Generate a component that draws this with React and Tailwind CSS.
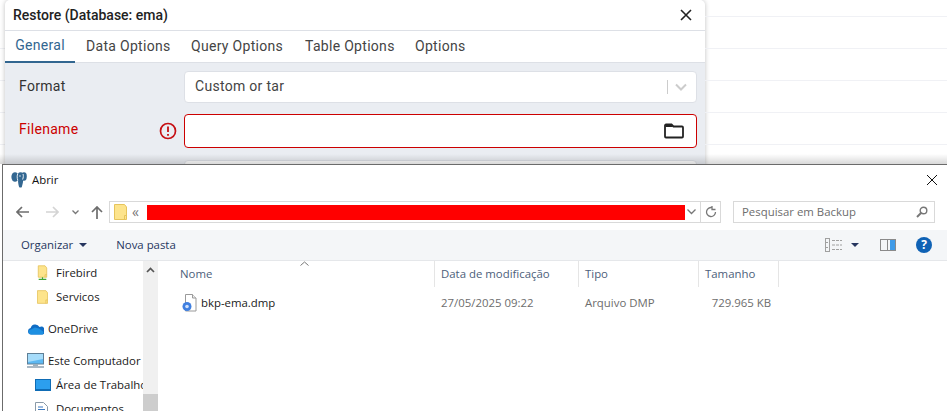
import React from 'react';

const FolderSmall = ({ className = '' }) => (
  <svg width="13" height="16" viewBox="0 0 13 16" className={className}>
    <path d="M0.500 0.500h10l2 2.500v12.500h-12z" fill="#fde48c" stroke="#e6c45c" />
    <path d="M10.500 15.500v-4h2" fill="none" stroke="#e6c45c" />
  </svg>
);

const NetFolder = ({ className = '' }) => (
  <svg width="13" height="18" viewBox="0 0 13 18" className={className}>
    <path d="M1.500 0.500h8l2 2.500v11h-10z" fill="#fde48c" stroke="#e6c45c" />
    <path d="M9.500 14v-3h2" fill="none" stroke="#e6c45c" />
    <path d="M6.500 14v2M2 16.500h9" stroke="#3fa535" strokeWidth="1.400" fill="none" />
  </svg>
);

const Elephant = () => (
  <svg width="16" height="16" viewBox="0 0 16 16">
    <ellipse cx="4" cy="5" rx="3.600" ry="4.800" fill="#336791" />
    <ellipse cx="9.500" cy="5" rx="3.800" ry="4.800" fill="#336791" />
    <ellipse cx="13" cy="4.500" rx="2.800" ry="4.200" fill="#336791" />
    <path d="M7 8h5c.3 2.500-.5 4-1.200 7-.2.800-2.300.800-2.700 0C7.500 13 7 10.500 7 8z" fill="#336791" />
    <path d="M6.800 1.500C6 3.500 6 6 6.800 8.500M12 2c.6 1.500.4 3.500-.4 5.500" fill="none" stroke="#ffffff" strokeWidth="0.900" />
    <circle cx="9" cy="4" r="0.700" fill="#ffffff" />
  </svg>
);

const FileDmp = () => (
  <svg width="15" height="18" viewBox="0 0 15 18">
    <path d="M3.500 0.500h7l3.500 3.500v13h-10.500z" fill="#fff" stroke="#9a9a9a" />
    <path d="M10.500 0.500v3.500h3.500" fill="#eee" stroke="#9a9a9a" />
    <circle cx="5" cy="12.500" r="4.500" fill="#3f7fe0" />
    <circle cx="5" cy="12.500" r="1.800" fill="#cfe0fb" />
  </svg>
);

const Cloud = () => (
  <svg width="17" height="12" viewBox="0 0 17 12">
    <path d="M4 11.500a3.300 3.300 0 0 1-.4-6.500A4.800 4.800 0 0 1 12.500 4a3.800 3.800 0 0 1 3 7.500z" fill="#0f6cc4" />
    <path d="M4 11.500a2.500 2.500 0 0 1 0-5l4-2 4 1 4 3c1 1 .5 3-1 3z" fill="#1d8fe1" />
  </svg>
);

const Monitor = () => (
  <svg width="17" height="16" viewBox="0 0 17 16">
    <rect x="0.500" y="0.500" width="16" height="10.500" fill="#5cb8f2" stroke="#5f7f96" />
    <path d="M1 1h15v5L1 9z" fill="#a6dcfa" />
    <rect x="6" y="11" width="5" height="2" fill="#9db0bd" />
    <rect x="0" y="13" width="17" height="2" fill="#a9b8c4" />
  </svg>
);

const Desktop = () => (
  <svg width="16" height="12" viewBox="0 0 16 12">
    <rect x="0.500" y="0.500" width="15" height="11" fill="#2c9fee" stroke="#0f6cb5" />
    <path d="M1 10h14v1H1z" fill="#0f6cb5" />
  </svg>
);

const DocIcon = () => (
  <svg width="13" height="14" viewBox="0 0 13 14">
    <path d="M0.500 0.500h8l4 4v9h-12z" fill="#fff" stroke="#8a9aa8" />
    <path d="M3 5h5M3 7.500h7M3 10h7" stroke="#3a78c0" />
  </svg>
);

const NavItem = ({ icon, label, className = '' }) => (
  <div className={`flex items-center h-[24px] shrink-0 whitespace-nowrap ${className}`}>
    <div className="w-[21px] flex justify-start shrink-0">{icon}</div>
    <span>{label}</span>
  </div>
);

const columns = [
  { label: 'Data de modificação', width: 'w-[144px]' },
  { label: 'Tipo', width: 'w-[120px]' },
  { label: 'Tamanho', width: 'w-[80px]' },
];

export default function App() {
  return (
    <div className="relative w-[947px] h-[411px] overflow-hidden bg-white flex flex-col">
      {/* pgAdmin part behind the file dialog */}
      <div className="relative h-[164px] shrink-0 flex items-start font-['Roboto',sans-serif] overflow-hidden">
        <div className="w-[5px] shrink-0 flex flex-col">
          <div className="h-[49px] border-b border-[#f0f1f5]" />
          <div className="h-[32px] border-b border-[#f0f1f5]" />
          <div className="h-[32px] border-b border-[#f0f1f5]" />
          <div className="h-[32px] border-b border-[#f0f1f5]" />
        </div>
        <div className="w-[700px] shrink-0 pb-[20px] bg-[#eaedf2] rounded-t-[5px] shadow-[0_0_5px_rgba(0,0,0,0.25)] flex flex-col">
          <div className="h-[31px] shrink-0 bg-white rounded-t-[5px] border-b border-[#dde0e6] flex items-center justify-between pl-[8px] pr-[13px]">
            <span className="text-[14px] font-medium text-[#222222]">Restore (Database: ema)</span>
            <svg width="12" height="12" viewBox="0 0 12 12">
              <path d="M1 1l10 10M11 1L1 11" stroke="#222222" strokeWidth="1.600" fill="none" />
            </svg>
          </div>
          <div className="h-[32px] shrink-0 bg-white border-b border-[#dde0e6] flex text-[14px] tracking-[0.3px] text-[#444444]">
            <div className="w-[70px] h-[32px] pb-[1px] border-b-[2px] border-[#326690] text-[#326690] flex items-center justify-center">General</div>
            <div className="pl-[11px] pb-[1px] w-[105px] flex items-center">Data Options</div>
            <div className="pl-[11px] pb-[1px] w-[114px] flex items-center">Query Options</div>
            <div className="pl-[11px] pb-[1px] w-[111px] flex items-center">Table Options</div>
            <div className="pl-[10px] pb-[1px] flex items-center">Options</div>
          </div>
          <div className="flex flex-col pl-[14px] pr-[8px] pt-[8px] text-[14px] tracking-[0.3px]">
            <div className="flex items-center h-[32px]">
              <span className="w-[165px] pb-[1px] text-[#333333]">Format</span>
              <div className="flex-1 h-[32px] bg-white rounded-[4px] border border-[#dde0e6] flex items-center pl-[10px] pr-[8px] text-[#444444]">
                <span className="flex-1 pb-[1px]">Custom or tar</span>
                <div className="w-px h-[14px] bg-[#cccccc] mr-[6px]" />
                <svg width="14" height="14" viewBox="0 0 14 14">
                  <path d="M2 4.500l5 5 5-5" stroke="#cccccc" strokeWidth="2" fill="none" />
                </svg>
              </div>
            </div>
            <div className="flex items-center h-[34px] mt-[11px]">
              <span className="w-[140px] pb-[4px] text-[#cc0000]">Filename</span>
              <div className="w-[25px] flex items-center">
                <svg width="18" height="18" viewBox="0 0 18 18">
                  <circle cx="9" cy="9" r="7.500" stroke="#c60f13" strokeWidth="1.700" fill="none" />
                  <path d="M9 4.500v5.500M9 12v1.800" stroke="#c60f13" strokeWidth="1.800" fill="none" />
                </svg>
              </div>
              <div className="flex-1 h-[34px] bg-white rounded-[4px] border border-[#cc0000] flex items-center justify-end pr-[12px]">
                <svg width="20" height="16" viewBox="0 0 20 16">
                  <path d="M1 2.500a1 1 0 0 1 1-1h5.500l2 2H18a1 1 0 0 1 1 1v9a1 1 0 0 1-1 1H2a1 1 0 0 1-1-1z" fill="none" stroke="#222222" strokeWidth="1.800" />
                  <path d="M1.500 2h6l1.500 2H1.500z" fill="#222222" />
                </svg>
              </div>
            </div>
            <div className="h-[31px] mt-[12px] ml-[165px] bg-white rounded-[4px] border border-[#dde0e6]" />
          </div>
        </div>
        <div className="flex-1 flex flex-col">
          <div className="h-[17px] border-b border-[#f0f1f5]" />
          <div className="h-[32px] border-b border-[#f0f1f5]" />
          <div className="h-[32px] border-b border-[#f0f1f5]" />
          <div className="h-[32px] border-b border-[#f0f1f5]" />
          <div className="h-[32px] border-b border-[#f0f1f5]" />
        </div>
        {/* shadow cast by the file dialog */}
        <div className="absolute left-0 right-0 bottom-0 h-[10px] bg-gradient-to-b from-transparent to-black/15" />
      </div>

      {/* Windows file dialog */}
      <div className="flex-1 min-h-0 ml-[2px] border-t border-l border-[#6b6b6b] bg-white flex flex-col font-['Open_Sans',sans-serif] text-[11.4px] overflow-hidden">
        <div className="h-[30px] shrink-0 flex items-center pl-[8px] pr-[9px]">
          <Elephant />
          <span className="ml-[5px] text-[#111111]">Abrir</span>
          <svg width="12" height="12" viewBox="0 0 12 12" className="ml-auto">
            <path d="M1 1l10 10M11 1L1 11" stroke="#111111" strokeWidth="1" fill="none" />
          </svg>
        </div>

        <div className="h-[35px] shrink-0 flex items-start pt-[6px] pl-[13px] pr-[10px]">
          <div className="w-[93px] h-[22px] flex items-center">
            <svg width="13" height="12" viewBox="0 0 13 12" className="mr-[17px]">
              <path d="M6 1L1 6l5 5M1 6h12" stroke="#6d6d6d" strokeWidth="1.700" fill="none" />
            </svg>
            <svg width="13" height="12" viewBox="0 0 13 12" className="mr-[13px]">
              <path d="M7 1l5 5-5 5M12 6H0" stroke="#d4d4d4" strokeWidth="1.700" fill="none" />
            </svg>
            <svg width="7" height="5" viewBox="0 0 7 5" className="mr-[12px]">
              <path d="M.5.500L3.500 3.500 6.500.500" stroke="#777777" strokeWidth="1.300" fill="none" />
            </svg>
            <svg width="12" height="13" viewBox="0 0 12 13">
              <path d="M1 6l5-5 5 5M6 1v12" stroke="#6d6d6d" strokeWidth="1.700" fill="none" />
            </svg>
          </div>
          <div className="w-[612px] h-[22px] border border-[#d9d9d9] flex items-center pl-[4px]">
            <FolderSmall />
            <span className="w-[20px] pl-[5px] text-[#777777] text-[14px] leading-none">«</span>
            <div className="w-[538px] h-[15px] bg-[#ff0000] shrink-0" />
            <svg width="9" height="6" viewBox="0 0 9 6" className="ml-[2px]">
              <path d="M.5.500l4 4 4-4" stroke="#777777" strokeWidth="1.300" fill="none" />
            </svg>
            <div className="w-px h-[20px] bg-[#d9d9d9] ml-[4px]" />
            <div className="flex-1 flex justify-center">
              <svg width="12" height="12" viewBox="0 0 12 12">
                <path d="M10.500 6A4.500 4.500 0 1 1 7.500 1.800M7 0v3.500h3.500" stroke="#777777" strokeWidth="1.300" fill="none" />
              </svg>
            </div>
          </div>
          <div className="ml-[12px] w-[202px] h-[22px] border border-[#d9d9d9] flex items-center justify-between pl-[8px] pr-[6px] text-[#6d6d6d]">
            <span>Pesquisar em Backup</span>
            <svg width="12" height="12" viewBox="0 0 12 12">
              <circle cx="7.500" cy="4.500" r="3.300" stroke="#777777" strokeWidth="1.400" fill="none" />
              <path d="M5 7L1 11" stroke="#777777" strokeWidth="2" />
            </svg>
          </div>
        </div>

        <div className="h-[31px] shrink-0 bg-[#f4f6f8] border-b border-[#e5e7ea] flex items-center pl-[18px] pr-[15px] text-[#26365f]">
          <span>Organizar</span>
          <div className="ml-[6px] w-0 h-0 border-x-[4px] border-x-transparent border-t-[4px] border-t-[#26365f]" />
          <span className="ml-[29px]">Nova pasta</span>
          <div className="ml-auto flex items-center">
            <svg width="17" height="14" viewBox="0 0 17 14">
              <rect x="0.500" y="0.500" width="4" height="13" fill="none" stroke="#a0a0a0" />
              <path d="M0 4.500h5M0 9.500h5M7 2.500h10M7 7h10M7 11.500h10" stroke="#a0a0a0" strokeDasharray="3 1" />
            </svg>
            <div className="ml-[9px] w-0 h-0 border-x-[4px] border-x-transparent border-t-[4px] border-t-[#26365f]" />
            <div className="ml-[21px] w-[16px] h-[12px] border border-[#8a8a8a] flex justify-end">
              <div className="w-px h-full bg-[#8a8a8a] mr-[2px]" />
              <div className="w-[5px] h-full bg-[#3f9be8]" />
            </div>
            <div className="ml-[20px] w-[16px] h-[16px] rounded-full bg-[#0f62b5] text-white text-[12px] font-bold flex items-center justify-center leading-none">?</div>
          </div>
        </div>

        <div className="flex-1 min-h-0 flex">
          <div className="w-[140px] shrink-0 flex flex-col text-[#1a1a1a] overflow-hidden pl-[24px]">
            <NavItem icon={<NetFolder className="ml-[10px]" />} label={<span className="ml-[8px]">Firebird</span>} />
            <NavItem icon={<FolderSmall className="ml-[10px]" />} label={<span className="ml-[8px]">Servicos</span>} />
            <NavItem className="mt-[8px]" icon={<Cloud />} label="OneDrive" />
            <NavItem className="mt-[8px]" icon={<Monitor />} label="Este Computador" />
            <NavItem className="pl-[8px]" icon={<Desktop />} label="Área de Trabalho" />
            <NavItem className="pl-[8px]" icon={<DocIcon />} label="Documentos" />
          </div>
          <div className="w-[15px] shrink-0 bg-[#f0f0f0] flex flex-col justify-between">
            <div className="h-[17px] flex items-center justify-center">
              <svg width="9" height="6" viewBox="0 0 9 6">
                <path d="M1 5l3.500-3.500L8 5" stroke="#555555" strokeWidth="1.700" fill="none" />
              </svg>
            </div>
            <div className="h-[17px] bg-[#cdcdcd]" />
          </div>
          <div className="flex-1 flex flex-col pl-[4px]">
            <div className="relative h-[26px] shrink-0 flex text-[#4c607a]">
              <svg width="9" height="5" viewBox="0 0 9 5" className="absolute left-[138px] top-0">
                <path d="M.5 4.500l4-3.500 4 3.500" stroke="#777777" fill="none" />
              </svg>
              <div className="w-[273px] pl-[18px] border-r border-[#e5e5e5] flex items-center">Nome</div>
              {columns.map((c) => (
                <div key={c.label} className={`${c.width} pl-[6px] border-r border-[#e5e5e5] flex items-center whitespace-nowrap`}>{c.label}</div>
              ))}
            </div>
            <div className="flex items-center h-[24px] mt-[4px]">
              <div className="w-[273px] pl-[20px] flex items-center text-[#1a1a1a]">
                <FileDmp />
                <span className="ml-[4px]">bkp-ema.dmp</span>
              </div>
              <div className="w-[144px] pl-[6px] text-[#6d6d6d]">27/05/2025 09:22</div>
              <div className="w-[120px] pl-[6px] text-[#6d6d6d]">Arquivo DMP</div>
              <div className="w-[72px] text-right text-[#6d6d6d] whitespace-nowrap">729.965 KB</div>
            </div>
          </div>
        </div>
      </div>
    </div>
  );
}
